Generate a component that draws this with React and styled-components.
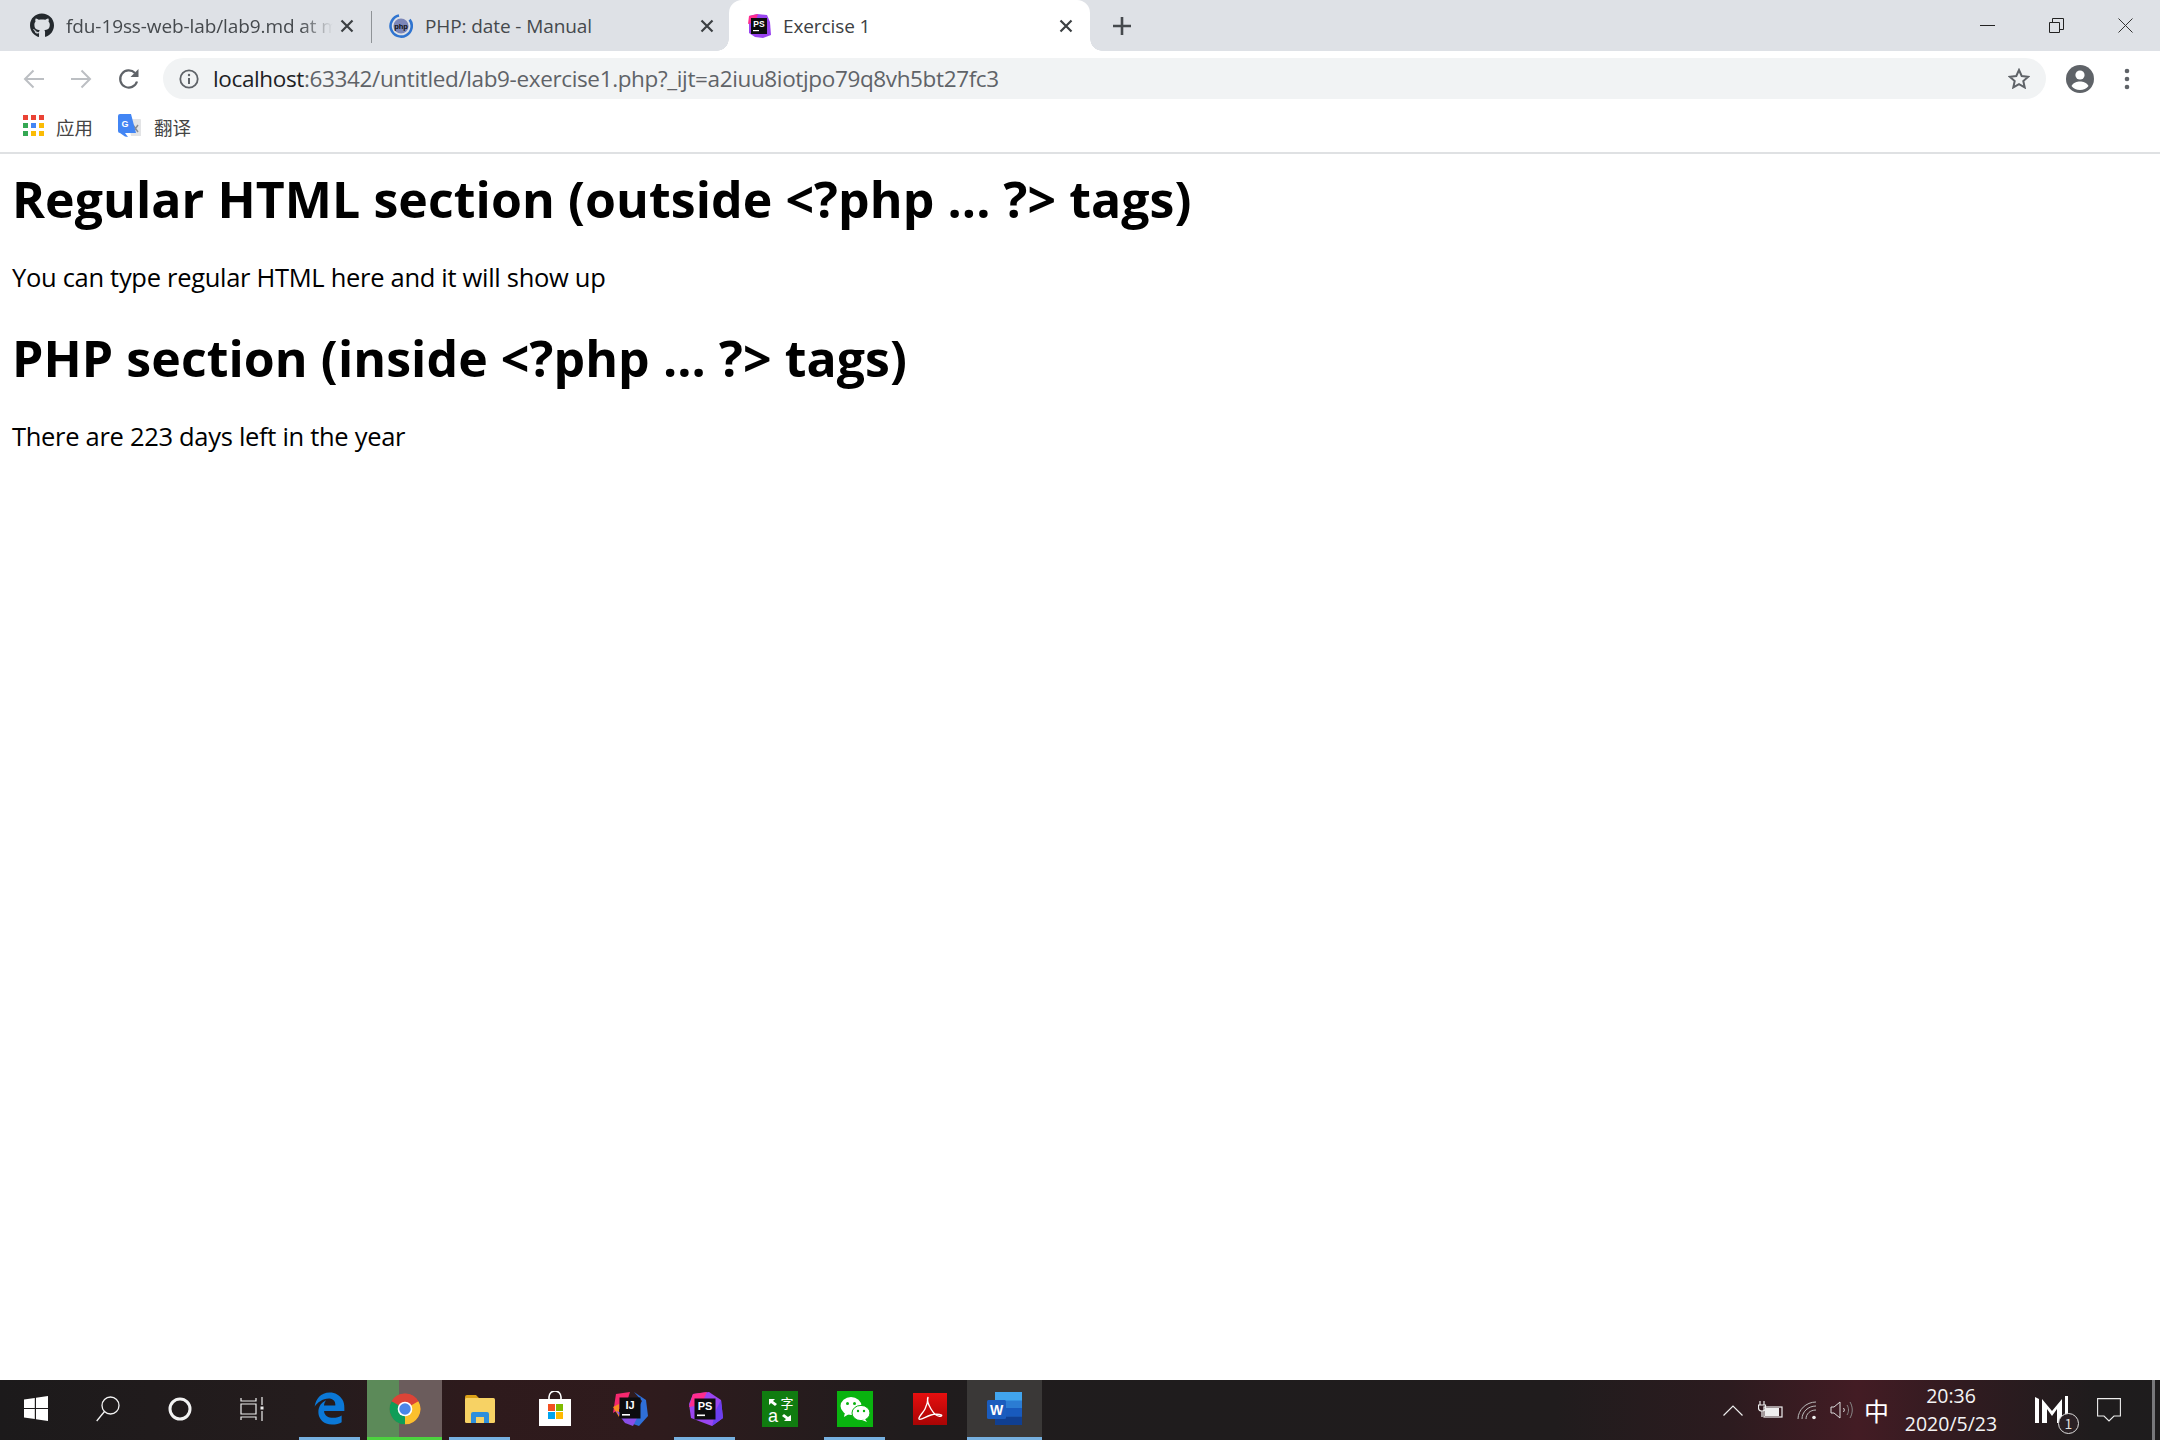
import React from 'react';
import styled, { createGlobalStyle } from 'styled-components';
import { FaGithub, FaEdgeLegacy } from 'react-icons/fa';

const Global = createGlobalStyle`
  html, body { margin: 0; padding: 0; background: #fff; }
  body { font-family: "Open Sans", "Noto Sans CJK SC", sans-serif; }
  * { box-sizing: border-box; }
`;

const Page = styled.div`
  width: 2160px; height: 1440px; display: flex; flex-direction: column; overflow: hidden; background: #fff;
`;
const TabStrip = styled.div`
  height: 51px; background: #dee1e6; display: flex; align-items: stretch; padding-left: 12px; position: relative;
`;
const Tab = styled.div`
  width: ${p => p.$w}px; height: 51px; display: flex; align-items: center; padding: 0 ${p => p.$pr || 16}px 0 ${p => p.$pl || 17}px; position: relative;
  font-size: 19px; color: ${p => p.$active ? '#3c4043' : '#45494d'};
  background: ${p => p.$active ? '#fff' : 'transparent'};
  border-radius: ${p => p.$active ? '13px 13px 0 0' : '0'};
  ${p => p.$active && `
    &::before, &::after { content: ""; position: absolute; bottom: 0; width: 12px; height: 12px; }
    &::before { left: -12px; background: radial-gradient(circle at 0 0, #dee1e6 11.5px, #fff 12px); }
    &::after { right: -12px; background: radial-gradient(circle at 100% 0, #dee1e6 11.5px, #fff 12px); }
  `}
`;
const TabIcon = styled.span`
  width: 24px; height: 24px; flex: none; display: flex; align-items: center; justify-content: center; color: #24292e; margin-right: 12px;
`;
const TabTitle = styled.span`
  flex: 1; white-space: nowrap; overflow: hidden; letter-spacing: -0.1px;
  ${p => p.$fade && `mask-image: linear-gradient(to right, #000 88%, transparent 100%);`}
`;
const TabClose = styled.span`
  width: 16px; height: 16px; flex: none; display: flex; margin-left: 6px;
`;
const TabSep = styled.div`
  width: 1px; height: 32px; margin-top: 11px; background: #8f9397; flex: none;
`;
const NewTab = styled.div`
  margin-left: 23px; width: 18px; display: flex; align-items: center; height: 51px;
`;
const WinControls = styled.div`
  margin-left: auto; display: flex; height: 51px; align-items: center; padding-right: 27px; gap: 54px;
`;
const Toolbar = styled.div`
  height: 51px; padding: 7px 0 0 10px; display: flex; align-items: flex-start; position: relative; background: #fff;
`;
const NavBtn = styled.span`
  width: ${p => p.$w}px; height: 41px; display: flex; align-items: center; justify-content: center; flex: none;
`;
const Omnibox = styled.div`
  width: 1883px; height: 41px; margin-left: 10px; border-radius: 21px; background: #f1f3f4; display: flex; align-items: center; padding-left: 16px; padding-right: 16px; flex: none;
`;
const UrlText = styled.div`
  margin-left: 14px; font-size: 22.5px; color: #5f6368; flex: 1; white-space: nowrap; letter-spacing: -0.365px;
`;
const UrlHost = styled.span`color: #202124;`;
const Bookmarks = styled.div`
  height: 52px; display: flex; align-items: center; padding: 0 0 3px 23px; border-bottom: 2px solid #dfe1e3; font-size: 18px; color: #444;
`;
const BookmarkItem = styled.div`
  display: flex; align-items: center; gap: 12px; margin-right: 25px;
`;
const BookmarkLabel = styled.span`
  font-family: "Noto Sans CJK SC", sans-serif; font-size: 18.5px; line-height: 24px; margin-top: 3px;
`;
const Content = styled.main`
  flex: 1; padding: 0 12px; color: #000; font-family: "Open Sans", "Noto Sans CJK SC", sans-serif;
`;
const Heading = styled.h1`
  font-size: 50px; font-weight: 700; line-height: 66px; margin: ${p => p.$first ? 12 : 30}px 0 0; letter-spacing: 0.08px;
`;
const Para = styled.p`
  font-size: 25.5px; line-height: 36px; margin: 27px 0 0; letter-spacing: -0.3px;
`;
const Taskbar = styled.footer`
  height: 60px; display: flex; align-items: stretch; color: #fff;
  background: linear-gradient(90deg, #1c1a1b 0, #241c1d 14%, #2e1a1c 22%, #2f1b1d 30%, #201c1d 42%, #1f1c1d 55%, #201c1d 72%, #2c1b1f 80%, #431c24 86%, #301b20 91%, #1f1c1d 97%, #1e1c1d 100%);
`;
const StartSlot = styled.div`
  width: 72px; display: flex; align-items: center; justify-content: center; flex: none; padding-bottom: 3px;
`;
const AppGap = styled.div`width: 4px; flex: none;`;
const AppSlot = styled.div`
  width: 75px; flex: none; display: flex; align-items: center; justify-content: center; position: relative; padding-bottom: 3px;
  background: ${p => p.$active ? '#3a3837' : 'transparent'};
  ${p => p.$progress && `background: linear-gradient(90deg, #5c8a59 0 43%, #6b5c5c 43% 100%);`}
  ${p => p.$run && `
    &::after { content: ""; position: absolute; bottom: 0; height: 3px;
      left: ${p.$full ? 0 : 7}px; right: ${p.$full ? 0 : 7}px;
      background: ${p.$progress ? '#4cd23f' : '#76b0e0'}; }
  `}
`;
const Tray = styled.div`
  margin-left: auto; display: flex; align-items: center; height: 60px;
`;
const TraySlot = styled.div`
  width: ${p => p.$w}px; flex: none; display: flex; align-items: center; justify-content: center; font-size: 25px;
  padding-left: ${p => p.$pl || 0}px;
  font-family: "Noto Sans CJK SC", sans-serif;
`;
const Clock = styled.div`
  width: 112px; display: flex; flex-direction: column; align-items: center; font-size: 19.5px; line-height: 28px; color: #f4f4f4; flex: none; padding-bottom: 1px;
`;
const EndLine = styled.div`
  width: 3px; height: 60px; background: #77777a; margin-left: 19px; margin-right: 5px; flex: none;
`;
const BadgedIcon = styled.div`
  position: relative; width: 34px; height: 30px;
`;
const Badge = styled.span`
  position: absolute; right: -10px; bottom: -9px; width: 21px; height: 21px; border-radius: 50%; border: 1.5px solid #ddd;
  background: #2a2024; font-size: 14px; line-height: 18px; text-align: center; color: #ddd;
`;

const CloseX = ({ c = '#3c4043' }) => (
  <svg width="16" height="16" viewBox="0 0 16 16"><path d="M2.5 2.5l11 11M13.5 2.5l-11 11" stroke={c} strokeWidth="2.2" /></svg>
);
const PhpIcon = () => (
  <svg width="24" height="24" viewBox="0 0 24 24">
    <circle cx="12" cy="12" r="7.6" fill="#7b86b8" />
    <path d="M20.6 5.6A10.6 10.6 0 1 1 10 1.6" fill="none" stroke="#2f74d0" strokeWidth="2.6" />
    <text x="12" y="14.6" textAnchor="middle" fontSize="7.5" fontWeight="700" fontFamily="Liberation Sans" fill="#111">php</text>
  </svg>
);
const JbIcon = ({ size, label, a = '#ff2d8e', b = '#9a45f0', c = '#6b3ff0' }) => (
  <svg width={size} height={size} viewBox="0 0 36 36">
    <path d="M6 3L22 1l12 8 2 18-11 8-8-3-13-5-2-14z" fill={b} />
    <path d="M6 3L20 1 14 14 2 16z" fill={a} />
    <path d="M34 9l2 18-11 8 4-16z" fill={c} />
    <rect x="7.5" y="7.5" width="21" height="21" fill="#0c0c0e" />
    <text x="18" y="19" textAnchor="middle" fontSize="11" fontWeight="700" fontFamily="Liberation Sans" fill="#fff">{label}</text>
    <rect x="10" y="23.5" width="8" height="1.6" fill="#fff" />
  </svg>
);
const IJIcon = () => (
  <svg width="36" height="36" viewBox="0 0 36 36">
    <path d="M4 3L18 1 14 14 1 22z" fill="#f5286e" />
    <path d="M1 16l6-3v13z" fill="#f98a1f" />
    <path d="M22 1l12 8 2 16-9 10-9-3 12-22z" fill="#2f6fd8" />
    <path d="M4 20l9 12 8 3 4-8z" fill="#8a4fe8" />
    <rect x="7.5" y="6.5" width="21" height="21" fill="#0c0c0e" />
    <text x="18" y="18" textAnchor="middle" fontSize="11" fontWeight="700" fontFamily="Liberation Sans" fill="#fff">IJ</text>
    <rect x="10" y="23" width="8" height="1.6" fill="#fff" />
  </svg>
);
const ChromeIcon = () => (
  <svg width="32" height="34" viewBox="0 0 48 48">
    <circle cx="24" cy="24" r="23" fill="#db4437" />
    <path d="M24 24L44 12.5A23 23 0 0 1 24 47z" fill="#fbc02d" />
    <path d="M24 24L24 47A23 23 0 0 1 4 12.5z" fill="#0f9d58" />
    <path d="M4 12.5A23 23 0 0 1 44 12.5H24z" fill="#db4437" />
    <circle cx="24" cy="24" r="11" fill="#fff" />
    <circle cx="24" cy="24" r="8.6" fill="#4a86e8" />
  </svg>
);
const ExplorerIcon = () => (
  <svg width="32" height="28" viewBox="0 0 32 28">
    <path d="M1 2a2 2 0 0 1 2-2h9l3 3h2v3H1z" fill="#dca118" />
    <rect x="1" y="3" width="30" height="25" rx="1.5" fill="#f7d264" />
    <path d="M7 28v-9a2 2 0 0 1 2-2h14a2 2 0 0 1 2 2v9h-5v-6h-8v6z" fill="#2d8fdc" />
  </svg>
);
const StoreIcon = () => (
  <svg width="32" height="36" viewBox="0 0 32 36">
    <path d="M10 9V6a6 6 0 0 1 12 0v3" fill="none" stroke="#fff" strokeWidth="1.6" />
    <rect x="0" y="8" width="32" height="27" fill="#fff" />
    <rect x="9" y="13" width="7" height="7" fill="#f25022" />
    <rect x="17" y="13" width="7" height="7" fill="#7fba00" />
    <rect x="9" y="21" width="7" height="7" fill="#00a4ef" />
    <rect x="17" y="21" width="7" height="7" fill="#ffb900" />
  </svg>
);
const TranslatorIcon = () => (
  <svg width="36" height="36" viewBox="0 0 36 36">
    <rect width="36" height="36" fill="#107c10" />
    <path d="M7 8h6l-2 2 4 3-2 2-4-3-2 2z" fill="#fff" />
    <text x="25" y="17" textAnchor="middle" fontSize="13" fontFamily="Noto Sans CJK SC" fill="#fff">字</text>
    <text x="11" y="31" textAnchor="middle" fontSize="18" fontFamily="Liberation Sans" fill="#fff">a</text>
    <path d="M29 30h-7l2-2-4-3 2-2 4 3 3-2z" fill="#fff" />
  </svg>
);
const WechatIcon = () => (
  <svg width="36" height="36" viewBox="0 0 36 36">
    <rect width="36" height="36" fill="#09b30f" />
    <ellipse cx="14" cy="15" rx="10.5" ry="9" fill="#fff" />
    <path d="M8 21l-1 5 5-3z" fill="#fff" />
    <ellipse cx="24" cy="22" rx="9" ry="7.6" fill="#fff" stroke="#09b30f" strokeWidth="1" />
    <path d="M28 28l2 3-5-2z" fill="#fff" />
    <circle cx="10.5" cy="12.5" r="1.5" fill="#09b30f" />
    <circle cx="17.5" cy="12.5" r="1.5" fill="#09b30f" />
    <circle cx="21" cy="20" r="1.2" fill="#09b30f" />
    <circle cx="27" cy="20" r="1.2" fill="#09b30f" />
  </svg>
);
const AcrobatIcon = () => (
  <svg width="34" height="32" viewBox="0 0 34 32">
    <defs>
      <linearGradient id="acro" x1="0" y1="0" x2="0" y2="1"><stop offset="0" stopColor="#e60f0f" /><stop offset="1" stopColor="#a80404" /></linearGradient>
    </defs>
    <rect width="34" height="32" fill="url(#acro)" />
    <path d="M15 4c-1 2 0 7 3 12s7 8 10 7-4-3-10-1-11 6-12 4 4-6 6-10 3-9 3-12z" fill="none" stroke="#fff" strokeWidth="1.4" />
  </svg>
);
const WordIcon = () => (
  <svg width="36" height="33" viewBox="0 0 36 33">
    <rect x="8" y="0" width="27" height="33" rx="1.5" fill="#2b7cd3" />
    <rect x="8" y="0" width="27" height="8.5" fill="#41a5ee" />
    <rect x="8" y="16" width="27" height="8.5" fill="#185abd" />
    <rect x="8" y="24.5" width="27" height="8.5" fill="#103f91" />
    <rect x="0" y="8" width="19" height="19" rx="1.5" fill="#1a5cbe" />
    <text x="9.5" y="22.5" textAnchor="middle" fontSize="14" fontWeight="700" fontFamily="Liberation Sans" fill="#fff">W</text>
  </svg>
);

export default function App() {
  return (
    <Page>
      <Global />
      <TabStrip>
        <Tab $w={359} $pl={18}>
          <TabIcon><FaGithub size={25} /></TabIcon>
          <TabTitle $fade>fdu-19ss-web-lab/lab9.md at master</TabTitle>
          <TabClose><CloseX /></TabClose>
        </Tab>
        <TabSep />
        <Tab $w={357} $pr={14}>
          <TabIcon><PhpIcon /></TabIcon>
          <TabTitle>PHP: date - Manual</TabTitle>
          <TabClose><CloseX /></TabClose>
        </Tab>
        <Tab $w={361} $active $pl={18}>
          <TabIcon>
            <svg width="24" height="26" viewBox="0 0 24 26">
              <path d="M2 3l8-2 10 1 3 7 1 13-8 3-8-1-6-4z" fill="#9a45f0" />
              <path d="M2 3l9-2-3 8-7 2z" fill="#ff2d8e" />
              <rect x="4" y="5" width="16" height="16" fill="#0c0c0e" />
              <text x="12" y="13.5" textAnchor="middle" fontSize="8.5" fontWeight="700" fontFamily="Liberation Sans" fill="#fff">PS</text>
              <rect x="6" y="17" width="6" height="1.2" fill="#fff" />
            </svg>
          </TabIcon>
          <TabTitle>Exercise 1</TabTitle>
          <TabClose><CloseX /></TabClose>
        </Tab>
        <NewTab>
          <svg width="18" height="18" viewBox="0 0 18 18"><path d="M9 0v18M0 9h18" stroke="#45494d" strokeWidth="2.6" /></svg>
        </NewTab>
        <WinControls>
          <svg width="15" height="15" viewBox="0 0 15 15"><path d="M0 7.5h15" stroke="#222" strokeWidth="1" /></svg>
          <svg width="15" height="15" viewBox="0 0 15 15" fill="none"><path d="M.5 4.5h10v10H.5zM3.5 4.5v-4h11v11h-4" stroke="#222" /></svg>
          <svg width="15" height="15" viewBox="0 0 15 15"><path d="M.5.5l14 14M14.5.5l-14 14" stroke="#333" strokeWidth="1" /></svg>
        </WinControls>
      </TabStrip>
      <Toolbar>
        <NavBtn $w={47}>
          <svg width="22" height="20" viewBox="0 0 22 20" fill="none" stroke="#bcbfc3" strokeWidth="2"><path d="M21 10H2M10.5 1.5L2 10l8.5 8.5" /></svg>
        </NavBtn>
        <NavBtn $w={47}>
          <svg width="22" height="20" viewBox="0 0 22 20" fill="none" stroke="#bcbfc3" strokeWidth="2"><path d="M1 10h19M11.5 1.5L20 10l-8.5 8.5" /></svg>
        </NavBtn>
        <NavBtn $w={49}>
          <svg width="22" height="22" viewBox="0 0 22 22" fill="none"><path d="M19 13.5A8.6 8.6 0 1 1 17 5" stroke="#5f6368" strokeWidth="2.2" /><path d="M20.5 1v8h-8z" fill="#5f6368" /></svg>
        </NavBtn>
        <Omnibox>
          <svg width="20" height="20" viewBox="0 0 20 20" fill="none"><circle cx="10" cy="10" r="8.7" stroke="#5f6368" strokeWidth="1.8" /><path d="M10 9v6" stroke="#5f6368" strokeWidth="2" /><circle cx="10" cy="6" r="1.2" fill="#5f6368" /></svg>
          <UrlText><UrlHost>localhost</UrlHost>:63342/untitled/lab9-exercise1.php?_ijt=a2iuu8iotjpo79q8vh5bt27fc3</UrlText>
          <svg width="22" height="21" viewBox="0 0 22 21" fill="none"><path d="M11 2l2.7 6 6.5.7-4.9 4.3 1.4 6.4L11 16.1l-5.7 3.3 1.4-6.4L1.8 8.7 8.3 8z" stroke="#5f6368" strokeWidth="2" /></svg>
        </Omnibox>
        <NavBtn $w={67}>
          <svg width="28" height="28" viewBox="0 0 28 28"><circle cx="14" cy="14" r="14" fill="#5f6368" /><circle cx="14" cy="10" r="4.6" fill="#fff" /><path d="M5.5 21c2-3.5 5.3-4.5 8.5-4.5s6.500 1 8.500 4.500c-2 2.500-5 4-8.500 4s-6.500-1.500-8.500-4z" fill="#fff" /></svg>
        </NavBtn>
        <NavBtn $w={28}>
          <svg width="6" height="22" viewBox="0 0 6 22" fill="#5f6368"><circle cx="3" cy="3" r="2.3" /><circle cx="3" cy="11" r="2.3" /><circle cx="3" cy="19" r="2.3" /></svg>
        </NavBtn>
      </Toolbar>
      <Bookmarks>
        <BookmarkItem>
          <svg width="21" height="21" viewBox="0 0 21 21">
            <rect x="0" y="0" width="5" height="5" fill="#ea4335" /><rect x="8" y="0" width="5" height="5" fill="#ea4335" /><rect x="16" y="0" width="5" height="5" fill="#ea4335" />
            <rect x="0" y="8" width="5" height="5" fill="#34a853" /><rect x="8" y="8" width="5" height="5" fill="#4285f4" /><rect x="16" y="8" width="5" height="5" fill="#fbbc05" />
            <rect x="0" y="16" width="5" height="5" fill="#34a853" /><rect x="8" y="16" width="5" height="5" fill="#fbbc05" /><rect x="16" y="16" width="5" height="5" fill="#fbbc05" />
          </svg>
          <BookmarkLabel>应用</BookmarkLabel>
        </BookmarkItem>
        <BookmarkItem>
          <svg width="24" height="24" viewBox="0 0 24 24">
            <path d="M10 5h12a1 1 0 0 1 1 1v16H13z" fill="#e3e4e6" />
            <path d="M15 11l5 7M20 11l-5 7" stroke="#8a8d92" strokeWidth="1.5" />
            <path d="M2 0h11l5 19H7l3 4-3-.5L2 19a2 2 0 0 1-2-2V2a2 2 0 0 1 2-2z" fill="#4285f4" />
            <text x="7" y="13" textAnchor="middle" fontSize="9" fontWeight="700" fontFamily="Liberation Sans" fill="#fff">G</text>
          </svg>
          <BookmarkLabel>翻译</BookmarkLabel>
        </BookmarkItem>
      </Bookmarks>
      <Content>
        <Heading $first>Regular HTML section (outside &lt;?php ... ?&gt; tags)</Heading>
        <Para>You can type regular HTML here and it will show up</Para>
        <Heading>PHP section (inside &lt;?php ... ?&gt; tags)</Heading>
        <Para>There are 223 days left in the year</Para>
      </Content>
      <Taskbar>
        <StartSlot>
          <svg width="24" height="25" viewBox="0 0 24 25" fill="#fff"><path d="M0 3.5l10.800-1.600v10H0zM12 1.700L24 0v11.900H12zM0 13.100h10.800v10L0 21.500zM12 13.100h12V25l-12-1.700z" /></svg>
        </StartSlot>
        <StartSlot>
          <svg width="24" height="26" viewBox="0 0 24 26" fill="none" stroke="#f2f2f2" strokeWidth="1.3"><circle cx="14.5" cy="9.5" r="8.5" /><path d="M8.5 15.5L.7 25" /></svg>
        </StartSlot>
        <StartSlot>
          <svg width="24" height="24" viewBox="0 0 24 24" fill="none"><circle cx="12" cy="12" r="10" stroke="#f2f2f2" strokeWidth="3" /></svg>
        </StartSlot>
        <StartSlot>
          <svg width="24" height="24" viewBox="0 0 24 24" fill="none" stroke="#eee" strokeWidth="1.2"><path d="M1 1v3h15V1M1 7h15v10H1zM1 23v-3h15v3M22 0v8M22 14v10" /><rect x="20.5" y="9.5" width="3" height="3" fill="#eee" stroke="none" /></svg>
        </StartSlot>
        <AppGap />
        <AppSlot $run><FaEdgeLegacy size={33} color="#0b78d7" /></AppSlot>
        <AppSlot $run $full $progress><ChromeIcon /></AppSlot>
        <AppSlot $run><ExplorerIcon /></AppSlot>
        <AppSlot><StoreIcon /></AppSlot>
        <AppSlot><IJIcon /></AppSlot>
        <AppSlot $run><JbIcon size={36} label="PS" /></AppSlot>
        <AppSlot><TranslatorIcon /></AppSlot>
        <AppSlot $run><WechatIcon /></AppSlot>
        <AppSlot><AcrobatIcon /></AppSlot>
        <AppSlot $run $full $active><WordIcon /></AppSlot>
        <Tray>
          <TraySlot $w={36}>
            <svg width="20" height="11" viewBox="0 0 20 11" fill="none" stroke="#eee" strokeWidth="1.2"><path d="M.5 10.5L10 1l9.500 9.500" /></svg>
          </TraySlot>
          <TraySlot $w={38}>
            <svg width="25" height="20" viewBox="0 0 25 20" fill="none" stroke="#eee" strokeWidth="1.2"><path d="M2 1v4M6 1v4M.5 5h7v3c0 2-1.500 3-3.500 3s-3.500-1-3.500-3zM4 11v6" /><rect x="6" y="7" width="18" height="10" /><rect x="7" y="8" width="14" height="8" fill="#eee" stroke="none" /></svg>
          </TraySlot>
          <TraySlot $w={36}>
            <svg width="20" height="19" viewBox="0 0 20 19" fill="none" stroke="#bbb" strokeWidth="1"><path d="M1 18C1 9 9 1 19 1M5 18c0-7 6-13 14-13M9 18c0-5 4-9 10-9" /><circle cx="17" cy="16.5" r="1.8" fill="#eee" stroke="none" /></svg>
          </TraySlot>
          <TraySlot $w={33}>
            <svg width="23" height="20" viewBox="0 0 23 20" fill="none" stroke="#ddd" strokeWidth="1"><path d="M1 7v6h3l6 5V2L4 7z" /><path d="M13.5 8a3 3 0 0 1 0 4" /><path d="M17 5c2 3 2 7 0 10M20 2c3 5 3 11 0 16" stroke="#888" /></svg>
          </TraySlot>
          <TraySlot $w={37}>中</TraySlot>
          <Clock>
            <span>20:36</span>
            <span>2020/5/23</span>
          </Clock>
          <TraySlot $w={78} $pl={12}>
            <BadgedIcon>
              <svg width="34" height="28" viewBox="0 0 34 28" fill="#fff"><path d="M0 1l4 2v24H0zM7 3l10 12L27 3v24h-5V13l-5 7-5-7v14H7zM30 0h3v27h-3z" /></svg>
              <Badge>1</Badge>
            </BadgedIcon>
          </TraySlot>
          <TraySlot $w={48}>
            <svg width="24" height="24" viewBox="0 0 24 24" fill="none" stroke="#eee" strokeWidth="1.1"><path d="M.6.6h22.800V18H17l-5 5-5-5H.6z" /></svg>
          </TraySlot>
          <EndLine />
        </Tray>
      </Taskbar>
    </Page>
  );
}
